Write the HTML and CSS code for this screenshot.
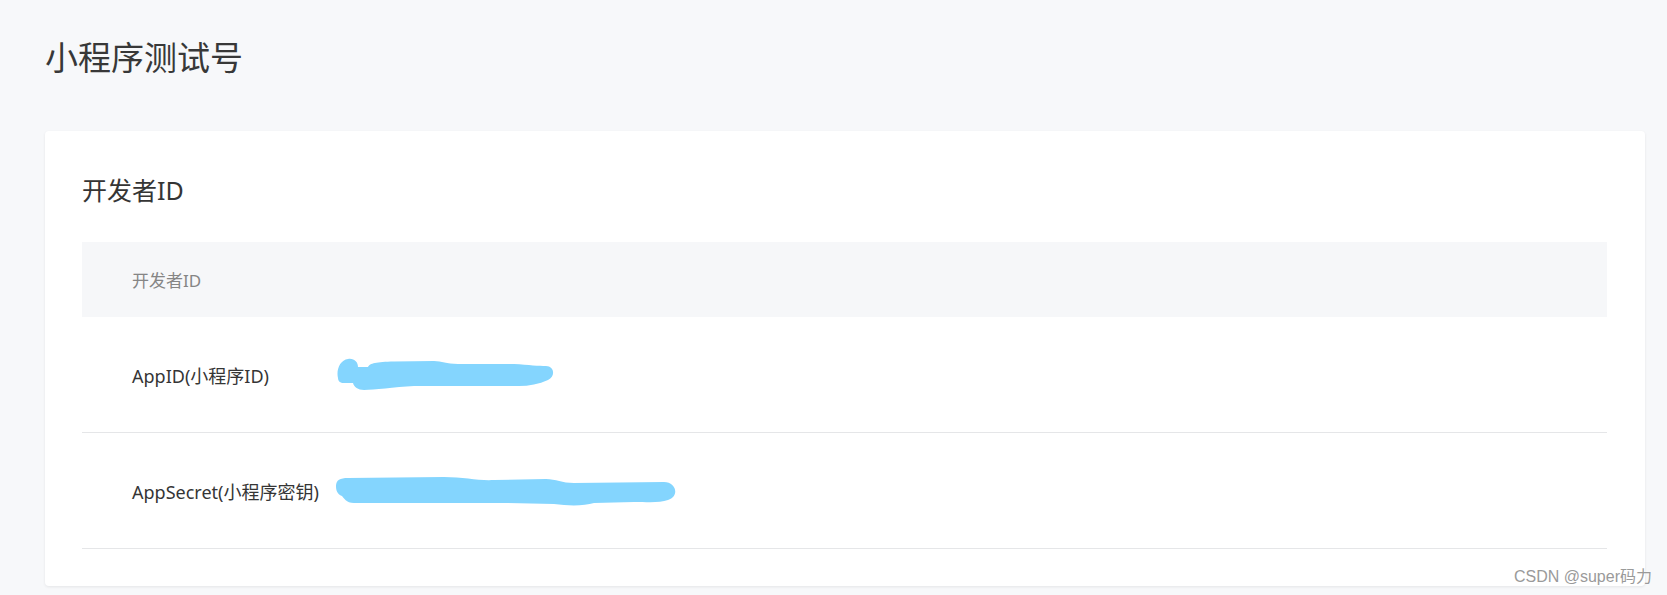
FILE: index.html
```html
<!DOCTYPE html>
<html lang="zh-CN">
<head>
  <meta charset="UTF-8" />
  <meta name="viewport" content="width=device-width, initial-scale=1.0"/>
  <title>小程序测试号</title>
  <link rel="stylesheet" href="styles.css">
</head>
<body>

<div class="page">
  <h1 class="page-title">小程序测试号</h1>

  <div class="card">
    <h2 class="card-title">开发者ID</h2>

    <table class="info-table">
      <thead>
        <tr>
          <th colspan="2">开发者ID</th>
        </tr>
      </thead>
      <tbody>
        <tr>
          <td class="label">AppID(小程序ID)</td>
          <td class="value">
            <svg class="mask" width="224" height="38" viewBox="0 0 224 38">
              <path d="M4 22 C2 14 6 4 14 3 C20 2 24 6 24 11 L34 11 C36 7 42 6 60 5.5 L100 5 C108 5 112 8 124 8 L180 8 C195 9 205 10 212 10 C220 10 222 20 214 24 C205 28 195 30 185 30 L80 30 C60 31 40 34 30 34 C24 34 20 31 19 27 L10 27 C6 27 4 25 4 22 Z"/>
            </svg>
          </td>
        </tr>
        <tr>
          <td class="label">AppSecret(小程序密钥)</td>
          <td class="value">
            <svg class="mask" width="346" height="38" viewBox="0 0 346 38">
              <path d="M2 14 C2 8 6 6 14 6 L110 5 C130 5 145 9 160 8 L212 7 C222 7 228 11 240 11 L330 10 C342 10 346 24 334 28 C326 31 315 30 300 30 L260 31 C250 34 235 34 220 32 L170 31 L20 31 C12 31 10 26 8 24 C3 22 2 18 2 14 Z"/>
            </svg>
          </td>
        </tr>
      </tbody>
    </table>
  </div>
</div>

<div class="watermark">CSDN @super码力</div>

</body>
</html>
```

FILE: styles.css
```css
body {
  margin: 0;
  background: #f7f8fa;
  font-family: "Noto Sans", "Noto Sans CJK SC", sans-serif;
  color: #353535;
}
.page {
  padding: 34px 22px 8px 45px;
}
.page-title {
  margin: 0;
  font-size: 33px;
  line-height: 44px;
  font-weight: normal;
  font-family: "Noto Sans CJK SC", sans-serif;
  color: #383838;
}
.card {
  margin-top: 53px;
  background: white;
  border-radius: 4px;
  box-shadow: 0 1px 3px rgba(0,0,0,0.08);
  padding: 42px 38px 37px 37px;
}
.card-title {
  margin: 0 0 35px;
  font-size: 25px;
  line-height: 34px;
  font-weight: normal;
}
.info-table {
  width: 100%;
  border-collapse: collapse;
  font-size: 18px;
}
.info-table th {
  height: 75px;
  padding: 0 0 0 50px;
  background: #f6f7f9;
  color: #858585;
  font-size: 17px;
  font-weight: normal;
  text-align: left;
}
.info-table td {
  height: 115px;
  border-bottom: 1px solid #e5e6e8;
  padding: 0;
}
.info-table td.label {
  width: 200px;
  padding-left: 50px;
}
.info-table td.value {
  padding-left: 2px;
}
.mask {
  display: block;
  fill: #84d5fe;
}
.watermark {
  position: absolute;
  right: 15px;
  top: 567px;
  font-family: "Liberation Sans", "Noto Sans CJK SC", sans-serif;
  font-size: 16px;
  line-height: 20px;
  color: #9a9a9a;
  text-shadow: 0 0 2px #fff;
}
```
